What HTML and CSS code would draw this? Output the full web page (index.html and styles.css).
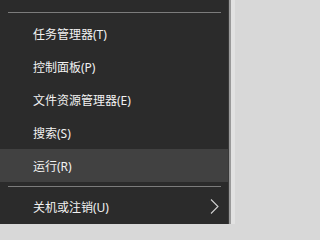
FILE: index.html
```html
<!DOCTYPE html>
<html lang="zh-CN">
<head>
<meta charset="utf-8">
<title>Win+X 菜单</title>
<link rel="stylesheet" href="styles.css">
</head>
<body>
<div class="screen">
  <div class="menu">
    <div class="sep sep-top"></div>
    <div class="item"><span class="label">任务管理器(T)</span></div>
    <div class="item"><span class="label">控制面板(P)</span></div>
    <div class="item"><span class="label">文件资源管理器(E)</span></div>
    <div class="item"><span class="label">搜索(S)</span></div>
    <div class="item item-hover"><span class="label">运行(R)</span></div>
    <div class="sep sep-bottom"></div>
    <div class="item item-sub">
      <span class="label">关机或注销(U)</span>
      <svg class="chev" width="9" height="17" viewBox="0 0 9 17"><path d="M1 1.5 L8 8.5 L1 15.5" fill="none" stroke="#d0d0d0" stroke-width="1.1"/></svg>
    </div>
  </div>
  <div class="edge">
    <div class="edge-line"></div>
    <div class="edge-bg"></div>
  </div>
</div>
</body>
</html>
```
FILE: styles.css
```css
html, body {
  margin: 0;
  padding: 0;
  background: #d8d8d8;
}
.screen {
  display: flex;
  width: 235px;
  height: 224px;
  overflow: hidden;
}
.menu {
  width: 228px;
  flex: none;
  background: #2b2b2b;
  border-right: 1px solid #3a3a3a;
  padding-top: 12px;
  box-sizing: content-box;
  display: flex;
  flex-direction: column;
}
.sep {
  height: 1px;
  background: #7c7c7c;
  margin-left: 8px;
  margin-right: 7px;
}
.sep-top {
  margin-bottom: 4px;
}
.sep-bottom {
  margin-top: 4px;
  margin-bottom: 3px;
}
.item {
  height: 33px;
  display: flex;
  align-items: center;
  justify-content: space-between;
  padding-left: 33px;
  padding-right: 9px;
  font-family: "Noto Sans", "Noto Sans CJK SC", sans-serif;
  font-size: 12px;
  color: #f2f2f2;
}
.item-hover {
  background: #414141;
}
.chev {
  display: block;
}
.edge {
  flex: 1;
  display: flex;
}
.edge-line {
  width: 2px;
  background: #9a9a9a;
}
.edge-bg {
  flex: 1;
  background: #e2e2e2;
}
```
